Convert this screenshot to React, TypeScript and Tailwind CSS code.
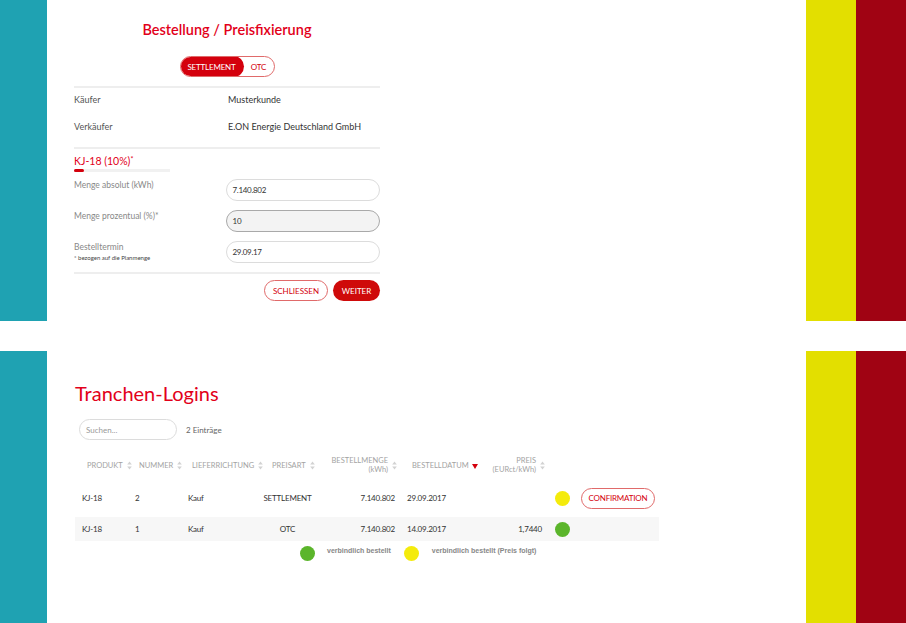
import React from "react";

const red = "text-[#e2001a]";

function SideStrips({ children, h }: { children: React.ReactNode; h: string }) {
  return (
    <div className={`flex ${h}`}>
      <div className="w-[47px] bg-[#1fa2b2]" />
      <div className="flex-1 bg-white">{children}</div>
      <div className="w-[50px] bg-[#e3df00]" />
      <div className="w-[50px] bg-[#a00313]" />
    </div>
  );
}

function SortIcon() {
  return (
    <svg width="5" height="9" viewBox="0 0 5 9" className="ml-[4px] shrink-0">
      <path d="M2.5 0.5 L4.8 3.6 L0.2 3.6 Z" fill="#d2d2d2" />
      <path d="M2.5 8.5 L4.8 5.4 L0.2 5.4 Z" fill="#d2d2d2" />
    </svg>
  );
}

function Dot({ color }: { color: string }) {
  return <div className={`w-[15px] h-[15px] rounded-full ${color}`} />;
}

const cols = [
  "w-[55px]",
  "w-[52px]",
  "w-[68px]",
  "w-[75px]",
  "w-[75px]",
  "w-[80px]",
  "w-[68px]",
  "w-[28px]",
  "w-[83px]",
];

const rows = [
  { p: "KJ-18", n: "2", l: "Kauf", a: "SETTLEMENT", m: "7.140.802", d: "29.09.2017", pr: "", dot: "bg-[#f4eb0c]", btn: true, bg: "" },
  { p: "KJ-18", n: "1", l: "Kauf", a: "OTC", m: "7.140.802", d: "14.09.2017", pr: "1,7440", dot: "bg-[#5bb52b]", btn: false, bg: "bg-[#f7f7f7]" },
];

export default function App() {
  return (
    <div className="w-[906px] h-[623px] bg-white font-['Lato',sans-serif] overflow-hidden">
      <SideStrips h="h-[321px]">
        <div className="ml-[27px] w-[306px] pt-[20px]">
          <h1 className={`text-center text-[14.5px] leading-[20px] font-semibold ${red}`}>
            Bestellung / Preisfixierung
          </h1>
          <div className="mt-[16px] flex justify-center">
            <div className="flex h-[21px] w-[95px] rounded-full border border-[#e06a6a] overflow-hidden text-[8px] tracking-[-0.2px]">
              <div className="w-[64px] -ml-px -my-px bg-[#d4000d] text-white flex items-center justify-center rounded-full">
                SETTLEMENT
              </div>
              <div className="flex-1 flex items-center justify-center text-[#d4000d]">OTC</div>
            </div>
          </div>
          <div className="mt-[9px] h-[2px] bg-[#eeeeee]" />
          <div className="flex h-[24px] items-center text-[9px]">
            <span className="w-[154px] text-[#555]">Käufer</span>
            <span className="text-[#333]">Musterkunde</span>
          </div>
          <div className="mt-[3px] flex h-[24px] items-center text-[9px]">
            <span className="w-[154px] text-[#555]">Verkäufer</span>
            <span className="text-[#333]">E.ON Energie Deutschland GmbH</span>
          </div>
          <div className="mt-[8px] h-[2px] bg-[#eeeeee]" />
          <div className={`mt-[5px] text-[10.5px] leading-[15px] ${red}`}>
            KJ-18 (10%)<sup className="text-[7px]">*</sup>
          </div>
          <div className="flex w-[96px] h-[3px] bg-[#f1f1f1]">
            <div className="w-[10px] bg-[#d4000d] rounded-full" />
          </div>
          <div className="mt-[7px] flex flex-col gap-[9px]">
            <div className="flex">
              <span className="w-[153px] text-[8.5px] leading-[12px] text-[#888]">Menge absolut (kWh)</span>
              <div className="w-[154px] h-[22px] rounded-full border border-[#dcdcdc] bg-white flex items-center pl-[5px] text-[8px] text-[#333] tracking-[-0.3px]">
                7.140.802
              </div>
            </div>
            <div className="flex">
              <span className="w-[153px] text-[8.5px] leading-[12px] text-[#888]">Menge prozentual (%)*</span>
              <div className="w-[154px] h-[22px] rounded-full border border-[#a9a9a9] bg-[#f3f3f3] flex items-center pl-[5px] text-[8px] text-[#333]">
                10
              </div>
            </div>
            <div className="flex">
              <div className="w-[153px]">
                <div className="text-[8.5px] leading-[12px] text-[#888]">Bestelltermin</div>
                <div className="text-[6px] leading-[10px] text-[#444]">* bezogen auf die Planmenge</div>
              </div>
              <div className="w-[154px] h-[22px] rounded-full border border-[#dcdcdc] bg-white flex items-center pl-[5px] text-[8px] text-[#333] tracking-[-0.3px]">
                29.09.17
              </div>
            </div>
          </div>
          <div className="mt-[9px] h-[2px] bg-[#eeeeee]" />
          <div className="mt-[6px] flex justify-end gap-[5px] text-[8px]">
            <div className="w-[64px] h-[21px] rounded-full border border-[#e06a6a] text-[#d4000d] flex items-center justify-center">
              SCHLIESSEN
            </div>
            <div className="w-[47px] h-[21px] rounded-full bg-[#cf0a0a] text-white flex items-center justify-center">
              WEITER
            </div>
          </div>
        </div>
      </SideStrips>
      <div className="h-[30px]" />
      <SideStrips h="h-[272px]">
        <div className="pt-[30px] pl-[28px]">
          <h2 className={`text-[20px] leading-[24px] ${red}`}>Tranchen-Logins</h2>
          <div className="mt-[14px] ml-[4px] flex items-center gap-[9px]">
            <div className="w-[98px] h-[21px] rounded-full border border-[#dcdcdc] flex items-center pl-[6px] text-[8px] text-[#999]">
              Suchen...
            </div>
            <span className="text-[8px] text-[#666]">2 Einträge</span>
          </div>
          <div className="mt-[14px] w-[584px]">
            <div className="flex h-[22px] items-center text-[7.5px] text-[#a3a3a3] leading-[9px]">
              <div className={`${cols[0]} pl-[12px] flex items-center`}>PRODUKT<SortIcon /></div>
              <div className={`${cols[1]} pl-[9px] flex items-center`}>NUMMER<SortIcon /></div>
              <div className={`${cols[2]} pl-[10px] flex items-center`}>LIEFERRICHTUNG<SortIcon /></div>
              <div className={`${cols[3]} pl-[22px] flex items-center`}>PREISART<SortIcon /></div>
              <div className={`${cols[4]} pr-[3px] flex items-center justify-end text-right`}>
                <span>BESTELLMENGE<br />(kWh)</span><SortIcon />
              </div>
              <div className={`${cols[5]} pl-[12px] flex items-center`}>
                BESTELLDATUM
                <svg width="6" height="5" viewBox="0 0 6 5" className="ml-[3px] mt-[2px]">
                  <path d="M0 0 L6 0 L3 5 Z" fill="#d4000d" />
                </svg>
              </div>
              <div className={`${cols[6]} pr-[3px] flex items-center justify-end text-right`}>
                <span>PREIS<br />(EURct/kWh)</span><SortIcon />
              </div>
              <div className={cols[7]} />
              <div className={cols[8]} />
            </div>
            {rows.map((r, i) => (
              <div
                key={i}
                className={`flex h-[24px] items-center text-[8px] text-[#333] tracking-[-0.2px] ${r.bg} ${i === 0 ? "mt-[10px]" : "mt-[7px]"}`}
              >
                <div className={`${cols[0]} pl-[7px]`}>{r.p}</div>
                <div className={`${cols[1]} pl-[5px]`}>{r.n}</div>
                <div className={`${cols[2]} pl-[6px]`}>{r.l}</div>
                <div className={`${cols[3]} text-center`}>{r.a}</div>
                <div className={`${cols[4]} pr-[5px] text-right`}>{r.m}</div>
                <div className={`${cols[5]} pl-[7px]`}>{r.d}</div>
                <div className={`${cols[6]} pr-[6px] text-right`}>{r.pr}</div>
                <div className={`${cols[7]} flex justify-center`}>
                  <Dot color={r.dot} />
                </div>
                <div className={`${cols[8]} pl-[5px]`}>
                  {r.btn && (
                    <div className="w-[74px] h-[21px] rounded-full border border-[#e06a6a] text-[#d4000d] flex items-center justify-center text-[8px]">
                      CONFIRMATION
                    </div>
                  )}
                </div>
              </div>
            ))}
            <div className="mt-[4px] h-[16px] flex items-center font-['Liberation_Sans',sans-serif] font-bold text-[7px] text-[#888]">
              <div className="ml-[225px]"><Dot color="bg-[#5bb52b]" /></div>
              <span className="ml-[12px] -mt-[3px]">verbindlich bestellt</span>
              <div className="ml-[13px]"><Dot color="bg-[#f4eb0c]" /></div>
              <span className="ml-[13px] -mt-[3px]">verbindlich bestellt (Preis folgt)</span>
            </div>
          </div>
        </div>
      </SideStrips>
    </div>
  );
}
